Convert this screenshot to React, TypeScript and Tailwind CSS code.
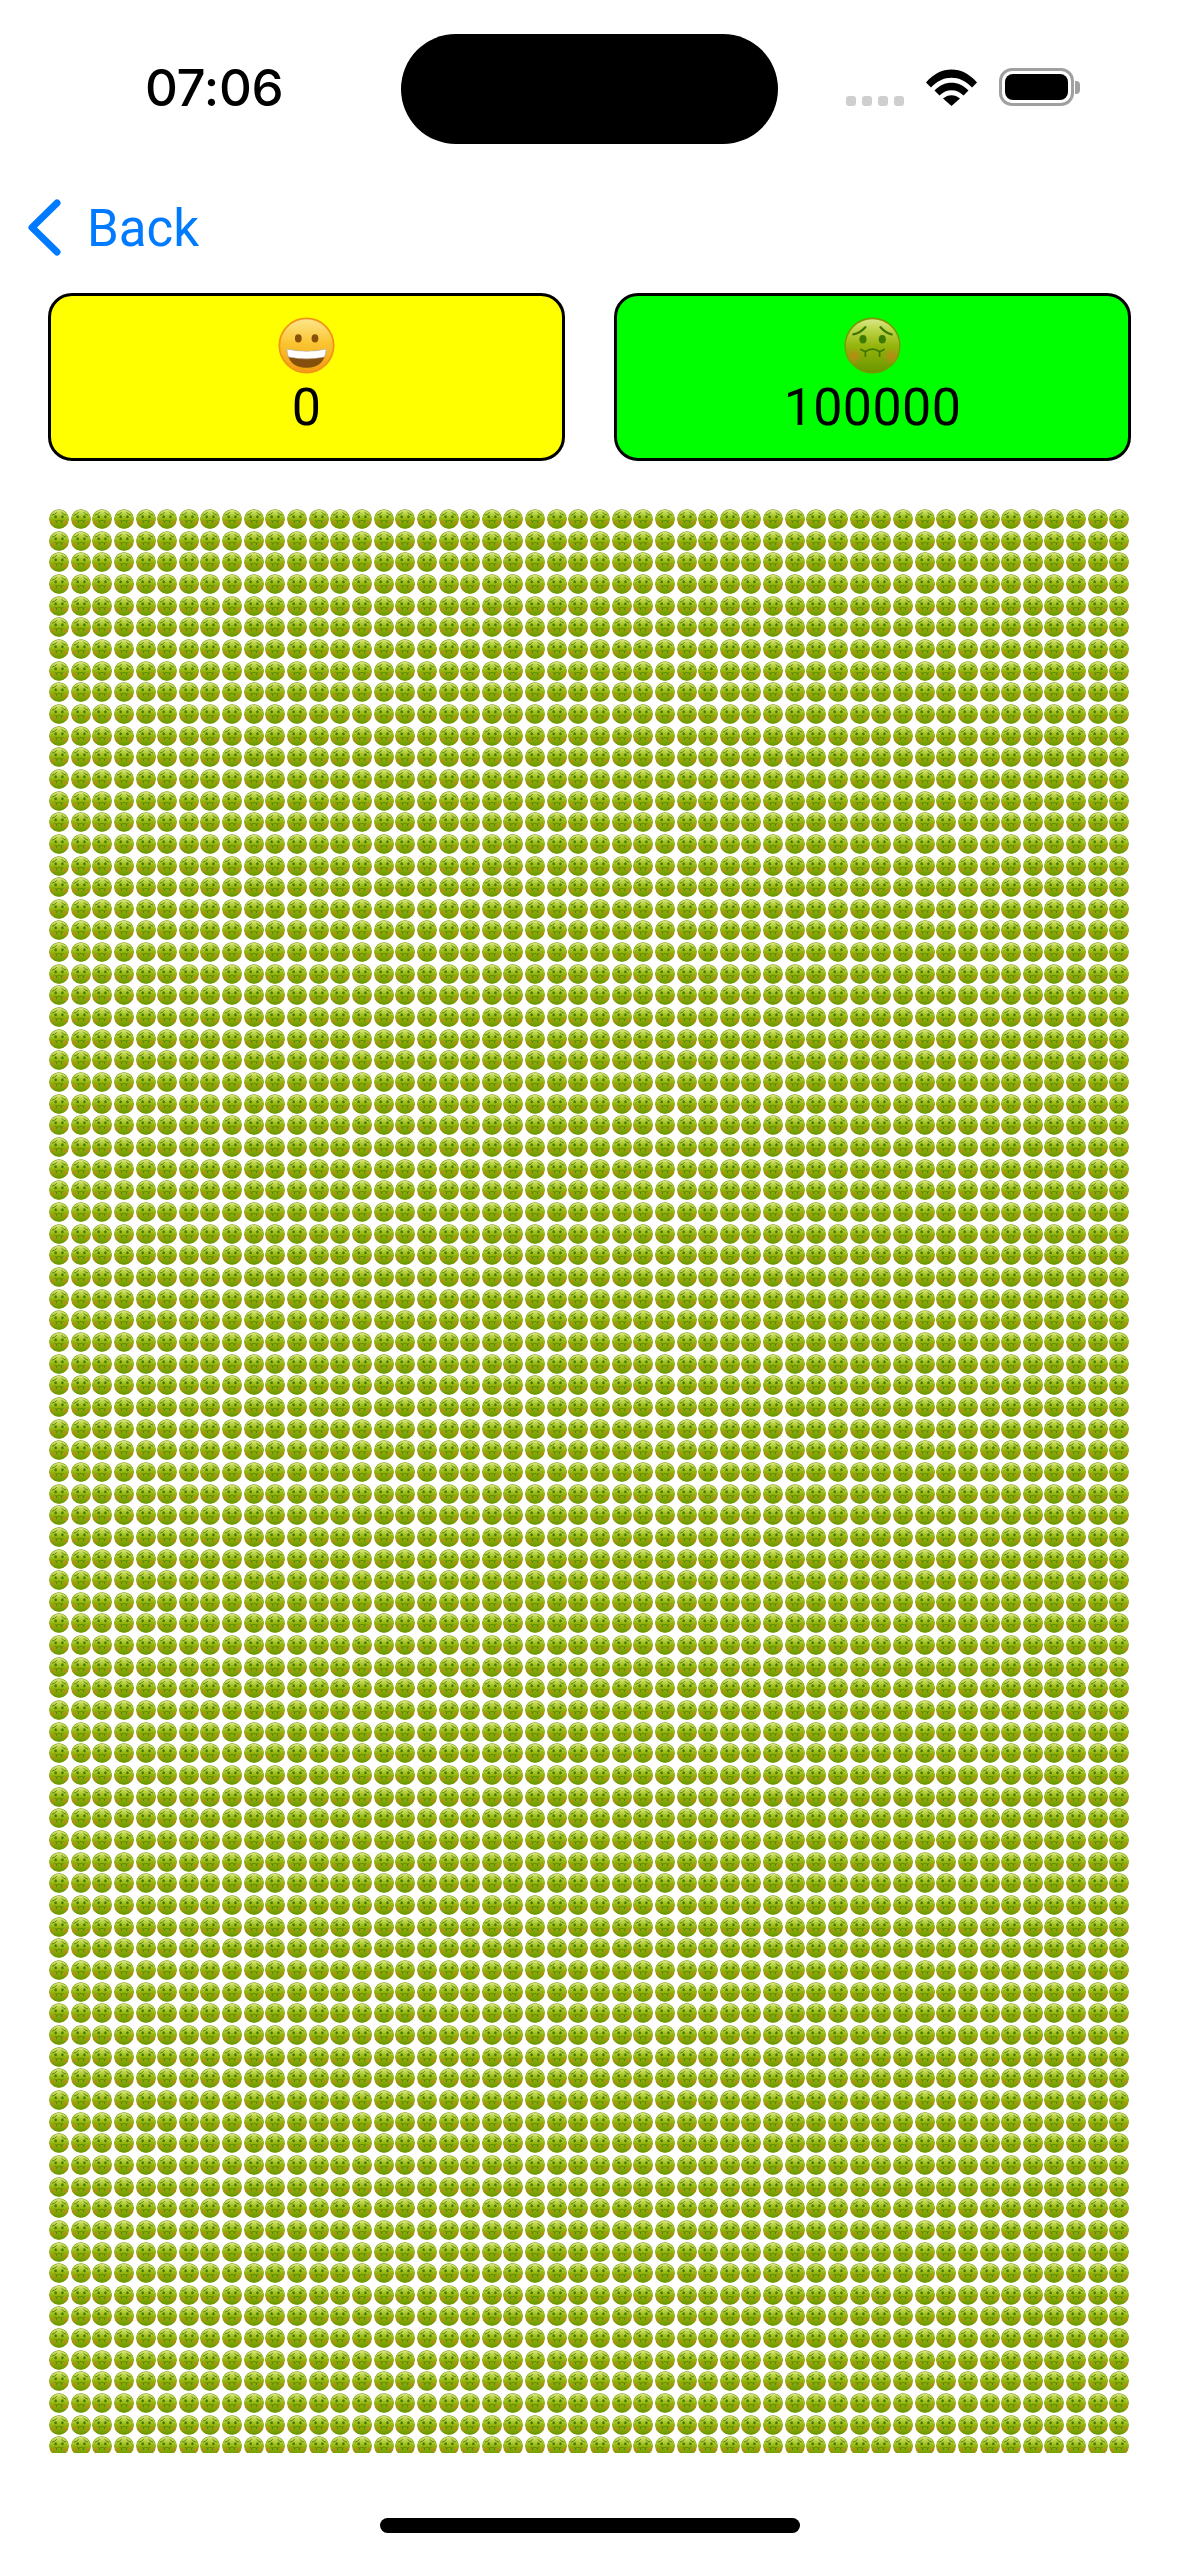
const COLS = 50;
const ROWS = 90;
const cells = Array.from({ length: COLS * ROWS }, (_, i) => i);

function SickDefs() {
  return (
    <svg width="0" height="0" className="absolute">
      <defs>
        <linearGradient id="sickFace" x1="0" y1="0" x2="0" y2="1">
          <stop offset="0" stopColor="#dbe68a" />
          <stop offset="0.16" stopColor="#c2d850" />
          <stop offset="0.5" stopColor="#95b40c" />
          <stop offset="1" stopColor="#6b9600" />
        </linearGradient>
        <radialGradient id="sickCheek">
          <stop offset="0" stopColor="#c9801a" stopOpacity="0.8" />
          <stop offset="1" stopColor="#c9801a" stopOpacity="0" />
        </radialGradient>
        <linearGradient id="happyFace" x1="0" y1="0" x2="0" y2="1">
          <stop offset="0" stopColor="#fde68a" />
          <stop offset="0.45" stopColor="#fbc531" />
          <stop offset="1" stopColor="#f29d12" />
        </linearGradient>
        <symbol id="sick" viewBox="0 0 64 64">
          <circle cx="32" cy="32" r="31.5" fill="#769800" />
          <circle cx="32" cy="32.5" r="30" fill="url(#sickFace)" />
          <circle cx="11" cy="44" r="10" fill="url(#sickCheek)" />
          <circle cx="53" cy="44" r="10" fill="url(#sickCheek)" />
          <ellipse cx="21.3" cy="25" rx="4" ry="4.8" fill="#3f7a00" />
          <ellipse cx="43" cy="25" rx="4" ry="4.8" fill="#3f7a00" />
          <path d="M10.5 19.5Q18 18 24 11.5M41 11.5Q47 18 53.5 19.5" fill="none" stroke="#3f7400" strokeWidth="2.6" strokeLinecap="round" />
          <path d="M19 36.5Q22 38 24 39Q32 33 40 39Q42 38 45 36.5M24 39V44M40 39V44" fill="none" stroke="#3f7400" strokeWidth="1.9" strokeLinecap="round" />
        </symbol>
      </defs>
    </svg>
  );
}

function Grin() {
  return (
    <svg width="57" height="57" viewBox="0 0 64 64" className="block">
      <circle cx="32" cy="32" r="31.5" fill="#f0951a" />
      <circle cx="32" cy="32" r="29.5" fill="url(#happyFace)" />
      <ellipse cx="22.8" cy="24" rx="3.8" ry="4.6" fill="#8a4f08" />
      <ellipse cx="41.5" cy="24" rx="3.8" ry="4.6" fill="#8a4f08" />
      <path d="M10 36Q32 41 54 36Q53 57 32 57Q11 57 10 36Z" fill="#85500c" />
      <path d="M10 36Q32 41 54 36Q53.8 42 52 45Q32 49 12 45Q10.2 42 10 36Z" fill="#fff" stroke="#b9b4a8" strokeWidth="0.6" />
    </svg>
  );
}

function Wifi() {
  return (
    <svg width="51" height="37" viewBox="0 0 51 37" className="block">
      <path d="M0 13.5C14 -4 37 -4 51 13.5L46 18.5C34 5.5 17 5.5 5 18.5Z" fill="#000" />
      <path d="M8.5 21.5C18 11 33 11 42.5 21.5L37.5 26.5C30.5 19.5 20.5 19.5 13.5 26.5Z" fill="#000" />
      <path d="M17 29.5C22 25 29 25 34 29.5L25.5 37Z" fill="#000" />
    </svg>
  );
}

function Battery() {
  return (
    <div className="flex items-center">
      <div className="w-[75px] h-[38px] rounded-[13px] border-[3px] border-[#a0a0a0] p-[3px]">
        <div className="w-full h-full rounded-[8px] bg-black" />
      </div>
      <div className="w-[5px] h-[13px] ml-[1px] rounded-r-[4px] bg-[#a0a0a0]" />
    </div>
  );
}

function Card({ bg, value, children }: { bg: string; value: string; children: React.ReactNode }) {
  return (
    <div className={`${bg} w-[517px] h-[168px] rounded-[24px] border-[3px] border-black flex flex-col items-center pt-[21px]`}>
      {children}
      <div className="text-[52px] leading-[60px] mt-[4px] tracking-[0.4px] text-black font-['Roboto',sans-serif]">{value}</div>
    </div>
  );
}

export default function App() {
  return (
    <div className="relative w-[1179px] h-[2556px] bg-white overflow-hidden flex flex-col font-['Inter',sans-serif]">
      <SickDefs />
      <div className="h-[199px] shrink-0 flex items-start">
        <div className="w-[401px] shrink-0 pl-[145px] pt-[57px] text-[51px] leading-[62px] font-medium tracking-[-0.3px] text-black">07:06</div>
        <div className="w-[377px] h-[110px] mt-[34px] shrink-0 rounded-[55px] bg-black" />
        <div className="flex items-end mt-[68px] ml-[68px] h-[38px]">
          <div className="flex gap-[6px]">
            {[0, 1, 2, 3].map((d) => (
              <div key={d} className="w-[10px] h-[10px] rounded-[3px] bg-[#cfcfcf]" />
            ))}
          </div>
          <div className="ml-[22px]"><Wifi /></div>
          <div className="ml-[22px]"><Battery /></div>
        </div>
      </div>
      <div className="h-[94px] shrink-0 flex items-start pl-[27px]">
        <svg width="34" height="57" viewBox="0 0 34 57" className="block">
          <path d="M30 4L5 28.5L30 53" fill="none" stroke="#007aff" strokeWidth="7" strokeLinecap="round" strokeLinejoin="round" />
        </svg>
        <div className="ml-[26px] text-[51px] leading-[60px] text-[#007aff] font-['Roboto',sans-serif]">Back</div>
      </div>
      <div className="shrink-0 flex justify-between pl-[48px] pr-[48px]">
        <Card bg="bg-[#ffff00]" value="0"><Grin /></Card>
        <Card bg="bg-[#00ff00]" value="100000">
          <svg width="57" height="57" className="block"><use href="#sick" /></svg>
        </Card>
      </div>
      <div className="mt-[48px] ml-[49px] w-[1082px] h-[1944px] overflow-hidden shrink-0 grid grid-cols-[repeat(50,minmax(0,1fr))] auto-rows-[21.67px]">
        {cells.map((i) => (
          <svg key={i} width="20" height="20" className="block"><use href="#sick" /></svg>
        ))}
      </div>
      <div className="mt-[65px] mx-auto w-[420px] h-[15px] rounded-full bg-black shrink-0" />
    </div>
  );
}
